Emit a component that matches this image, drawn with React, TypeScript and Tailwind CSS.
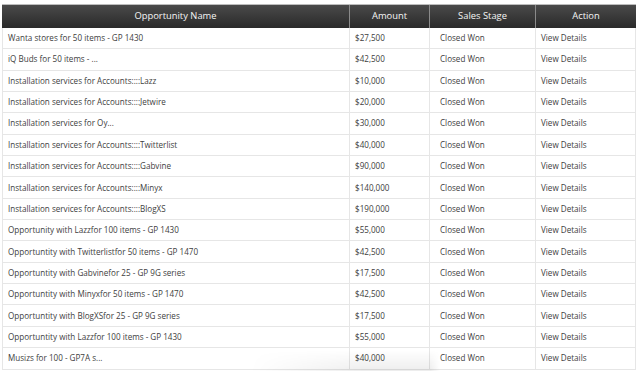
import React from "react";

const rows: [string, string][] = [
  ["Wanta stores for 50 items - GP 1430", "$27,500"],
  ["iQ Buds for 50 items - ...", "$42,500"],
  ["Installation services for Accounts::::Lazz", "$10,000"],
  ["Installation services for Accounts::::Jetwire", "$20,000"],
  ["Installation services for Oy...", "$30,000"],
  ["Installation services for Accounts::::Twitterlist", "$40,000"],
  ["Installation services for Accounts::::Gabvine", "$90,000"],
  ["Installation services for Accounts::::Minyx", "$140,000"],
  ["Installation services for Accounts::::BlogXS", "$190,000"],
  ["Opportunity with Lazzfor 100 items - GP 1430", "$55,000"],
  ["Opportuntity with Twitterlistfor 50 items - GP 1470", "$42,500"],
  ["Opportuntity with Gabvinefor 25 - GP 9G series", "$17,500"],
  ["Opportuntity with Minyxfor 50 items - GP 1470", "$42,500"],
  ["Opportuntity with BlogXSfor 25 - GP 9G series", "$17,500"],
  ["Opportuntity with Lazzfor 100 items - GP 1430", "$55,000"],
  ["Musizs for 100 - GP7A s...", "$40,000"],
];

export default function App() {
  return (
    <div
      className="relative w-[640px] h-[371px] overflow-hidden bg-white"
      style={{ fontFamily: '"Open Sans", "Noto Sans", sans-serif' }}
    >
      <div className="pt-[4px] pl-[2px] w-[636px]">
        <div className="grid grid-cols-[348px_80px_106px_100px] h-[24px] bg-gradient-to-b from-[#4a4a4a] to-[#2a2a2a] border-t border-[#bdbdbd] text-[9.4px] text-[#f5f5f5]">
          <div className="flex items-center justify-center border-r border-[#8a8a8a]">Opportunity Name</div>
          <div className="flex items-center justify-center border-r border-[#8a8a8a]">Amount</div>
          <div className="flex items-center justify-center border-r border-[#8a8a8a]">Sales Stage</div>
          <div className="flex items-center justify-center">Action</div>
        </div>
        {rows.map(([name, amt], i) => (
          <div
            key={i}
            className="grid grid-cols-[348px_80px_106px_100px] h-[21.35px] border-b border-[#e6e6e6] text-[8.1px] text-[#404040]"
          >
            <div className="flex items-center pl-[5px] border-l border-r border-[#e6e6e6] whitespace-nowrap">{name}</div>
            <div className="flex items-center pl-[5px] border-r border-[#e6e6e6]">{amt}</div>
            <div className="flex items-center pl-[10px] border-r border-[#e6e6e6]">Closed Won</div>
            <div className="flex items-center pl-[5px] border-r border-[#e6e6e6]">View Details</div>
          </div>
        ))}
      </div>
      <div className="pointer-events-none absolute left-[250px] top-[350px] w-[190px] h-[21px] bg-gradient-to-b from-transparent to-[rgba(0,0,0,0.07)] [mask-image:linear-gradient(to_right,transparent,black_60%,black_95%,transparent)]" />
    </div>
  );
}
